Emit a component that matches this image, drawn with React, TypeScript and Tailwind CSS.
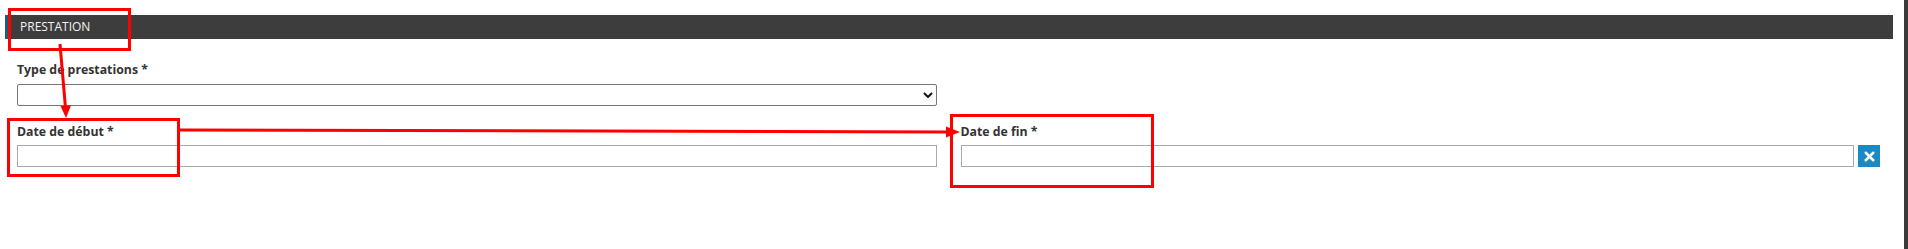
import { X } from "lucide-react";

function Label({ text }: { text: string }) {
  return <div className="text-[12.3px] leading-[18px] font-bold text-[#333333]">{text}</div>;
}

export default function App() {
  return (
    <div className="relative flex h-[249px] w-full bg-white font-['Open_Sans',sans-serif]">
      <div className="flex-1 pl-[5px] pr-[11px] pt-[15px]">
        {/* header */}
        <div className="flex h-[24px] items-center border-l-[3px] border-[#1d5d7c] bg-[#3d3d3d] pl-[12px] text-[12px] text-[#f2f2f2]">
          PRESTATION
        </div>

        <div className="pl-[12px] pr-[13px] pt-[22px]">
          <Label text="Type de prestations *" />
          <div className="mt-[5px] grid grid-cols-2 gap-[24px]">
            <div className="flex h-[22px] items-center justify-end rounded-[2px] border border-[#767676] pr-[3px]">
              <svg width="10" height="6" viewBox="0 0 10 6" className="text-[#111]">
                <path d="M1 1l4 4 4-4" fill="none" stroke="currentColor" strokeWidth="2" />
              </svg>
            </div>
            <div />
          </div>

          <div className="mt-[17px] grid grid-cols-2 gap-[24px]">
            <div>
              <Label text="Date de début *" />
              <div className="mt-[4px] h-[22px] border border-[#a9a9a9]" />
            </div>
            <div>
              <Label text="Date de fin *" />
              <div className="mt-[4px] flex gap-[4px]">
                <div className="h-[22px] flex-1 border border-[#a9a9a9]" />
                <button className="flex h-[22px] w-[22px] items-center justify-center bg-[#1a8bc2] text-white">
                  <X size={15} strokeWidth={4} />
                </button>
              </div>
            </div>
          </div>
        </div>
      </div>
      <div className="w-[4px] bg-[#3a3a3a]" />

      {/* annotations */}
      <div className="absolute left-[8px] top-[8px] h-[43px] w-[123px] border-[3px] border-[#ff0000]" />
      <div className="absolute left-[7px] top-[118px] h-[59px] w-[173px] border-[3px] border-[#ff0000]" />
      <div className="absolute left-[950px] top-[114px] h-[74px] w-[204px] border-[3px] border-[#ff0000]" />
      <svg className="pointer-events-none absolute left-0 top-0" width="1908" height="249">
        <line x1="60" y1="44" x2="65.5" y2="108" stroke="#ff0000" strokeWidth="3" />
        <polygon points="66,118 60.5,106 71,105.5" fill="#ff0000" />
        <line x1="180" y1="130" x2="948" y2="132" stroke="#ff0000" strokeWidth="3" />
        <polygon points="960,132 946,126.5 946,137.5" fill="#ff0000" />
      </svg>
    </div>
  );
}
